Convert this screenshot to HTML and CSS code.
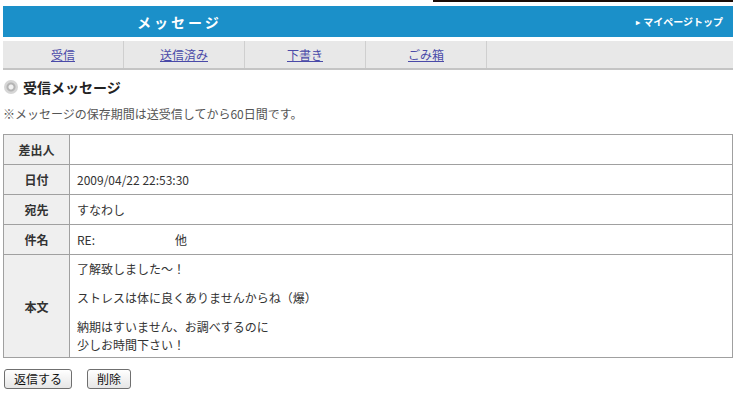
FILE: index.html
```html
<!DOCTYPE html>
<html lang="ja">
<head>
    <meta charset="UTF-8">
    <title>メッセージ</title>
    <link rel="stylesheet" href="styles.css">
</head>
<body>
    <div class="page">
        <div class="top-line"></div>

        <div class="title-bar">
            <h1>メッセージ</h1>
            <a href="#" class="mypage-link"><span class="arrow">&#9656;</span>マイページトップ</a>
        </div>

        <ul class="tabs">
            <li><a href="#">受信</a></li>
            <li><a href="#">送信済み</a></li>
            <li><a href="#">下書き</a></li>
            <li><a href="#">ごみ箱</a></li>
            <li class="tab-empty"></li>
        </ul>

        <h2 class="section-title"><span class="bullet"></span>受信メッセージ</h2>
        <p class="note">※メッセージの保存期間は送受信してから60日間です。</p>

        <table class="message">
            <tr>
                <th>差出人</th>
                <td></td>
            </tr>
            <tr>
                <th>日付</th>
                <td>2009/04/22 22:53:30</td>
            </tr>
            <tr>
                <th>宛先</th>
                <td>すなわし</td>
            </tr>
            <tr>
                <th>件名</th>
                <td>RE:<span class="subject-gap"></span>他</td>
            </tr>
            <tr class="body-row">
                <th>本文</th>
                <td>
                    <p>了解致しました～！</p>
                    <p>ストレスは体に良くありませんからね（爆）</p>
                    <p class="pair">納期はすいません、お調べするのに</p>
                    <p class="tight">少しお時間下さい！</p>
                </td>
            </tr>
        </table>

        <div class="actions">
            <button type="button" class="btn">返信する</button>
            <button type="button" class="btn">削除</button>
        </div>
    </div>
</body>
</html>
```

FILE: styles.css
```css
* {
    box-sizing: border-box;
    margin: 0;
    padding: 0;
}

body {
    font-family: "Noto Sans CJK JP", "Noto Sans", sans-serif;
    font-size: 12px;
    color: #333333;
    background: #ffffff;
}

.page {
    width: 730px;
    margin-left: 3px;
}

.top-line {
    height: 2px;
    margin-left: 430px;
    background: #1c0d08;
    margin-bottom: 4px;
}

/* blue title bar */
.title-bar {
    display: flex;
    align-items: center;
    justify-content: space-between;
    height: 31px;
    background: #1b90c9;
    padding: 0 10px 0 134px;
}

.title-bar h1 {
    font-size: 14px;
    font-weight: bold;
    color: #ffffff;
    letter-spacing: 3px;
    line-height: 1;
}

.mypage-link {
    color: #ffffff;
    font-size: 10px;
    font-weight: bold;
    text-decoration: none;
    line-height: 1;
}

.mypage-link .arrow {
    font-size: 8px;
    margin-right: 3px;
    vertical-align: 1px;
}

/* tabs */
.tabs {
    display: flex;
    list-style: none;
    margin-top: 4px;
    height: 29px;
    background: #e8e8e8;
    border-bottom: 2px solid #c4c4c4;
}

.tabs li {
    width: 121px;
    display: flex;
    align-items: center;
    justify-content: center;
    border-right: 1px solid #cfcfcf;
}

.tabs li.tab-empty {
    flex: 1;
    border-right: none;
}

.tabs a {
    color: #4a4aa8;
    font-size: 12px;
    line-height: 1;
    text-decoration: underline;
}

/* section heading */
.section-title {
    display: flex;
    align-items: center;
    gap: 5px;
    font-size: 14px;
    font-weight: bold;
    color: #222222;
    line-height: 1;
    margin: 10px 0 0 1px;
}

.bullet {
    flex-shrink: 0;
    width: 14px;
    height: 14px;
    border-radius: 50%;
    background: radial-gradient(circle, #f2f2f2 0, #f2f2f2 2px, #b4b4b4 3px, #b4b4b4 4px, #d6d6d6 5px);
}

.note {
    font-size: 12px;
    color: #555555;
    line-height: 1;
    margin-top: 14px;
}

/* message table */
.message {
    width: 100%;
    border-collapse: collapse;
    margin-top: 14px;
    border: 1px solid #a0a0a0;
}

.message th,
.message td {
    border: 1px solid #a0a0a0;
    height: 30px;
    font-size: 12px;
    line-height: 15px;
    vertical-align: middle;
}

.message th {
    width: 66px;
    background: #efefef;
    color: #333333;
    font-weight: bold;
    text-align: center;
}

.message td {
    padding: 0 7px;
    color: #333333;
    text-align: left;
}

.message .body-row td {
    height: 103px;
    padding: 4px 7px 3px;
}

.body-row p {
    margin-bottom: 14px;
}

.body-row p.pair {
    margin-bottom: 0;
}

.body-row p.tight {
    margin-top: 3px;
    margin-bottom: 0;
}

.subject-gap {
    display: inline-block;
    width: 80px;
}

/* buttons */
.actions {
    display: flex;
    gap: 15px;
    margin: 11px 0 0 1px;
}

.btn {
    font-family: "Noto Sans CJK JP", "Noto Sans", sans-serif;
    font-size: 12px;
    line-height: 1;
    color: #111111;
    height: 20px;
    padding: 0 9px;
    border: 1px solid #6f6f6f;
    border-radius: 3px;
    background: linear-gradient(#ffffff, #e6e6e6);
}
```
